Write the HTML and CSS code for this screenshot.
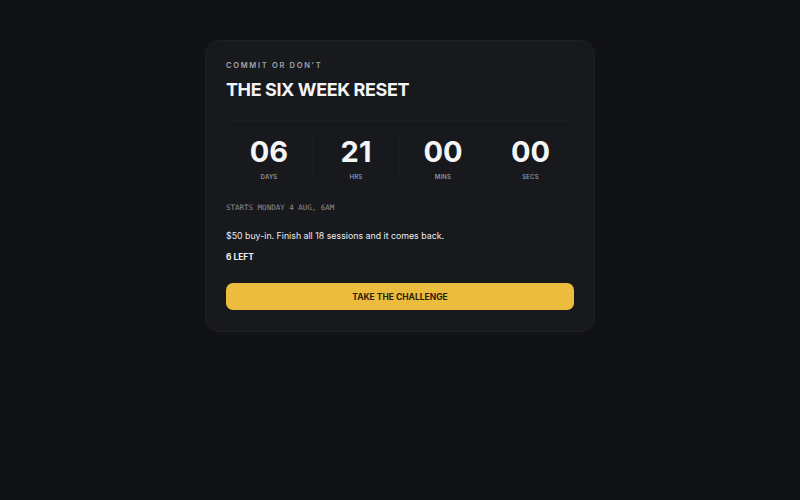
FILE: index.html
```html
<!DOCTYPE html>
<html lang="en">
<head>
  <meta charset="UTF-8" />
  <meta name="viewport" content="width=device-width, initial-scale=1.0"/>
  <title>The Six Week Reset</title>
  <link rel="stylesheet" href="styles.css">
</head>
<body>

  <main class="page">
    <section class="card">
      <p class="eyebrow">Commit or don't</p>
      <h1 class="title">THE SIX WEEK RESET</h1>

      <!-- countdown -->
      <div class="countdown">
        <div class="unit">
          <span class="num">06</span>
          <span class="label">Days</span>
        </div>
        <div class="unit">
          <span class="num">21</span>
          <span class="label">Hrs</span>
        </div>
        <div class="unit">
          <span class="num">00</span>
          <span class="label">Mins</span>
        </div>
        <div class="unit">
          <span class="num">00</span>
          <span class="label">Secs</span>
        </div>
      </div>

      <p class="starts">STARTS MONDAY 4 AUG, 6AM</p>
      <p class="blurb">$50 buy-in. Finish all 18 sessions and it comes back.</p>
      <p class="spots">6 LEFT</p>

      <button class="cta">TAKE THE CHALLENGE</button>
    </section>
  </main>

</body>
</html>
```

FILE: styles.css
```css
body {
  margin: 0;
  background: #111214;
  font-family: Inter, "Noto Sans", sans-serif;
  color: #f2f2f4;
}
.page {
  display: flex;
  justify-content: center;
  padding-top: 40px;
}
.card {
  width: 348px;
  padding: 20px 20px 21px;
  background: #18191d;
  border: 1px solid #1f2024;
  border-radius: 14px;
}
.eyebrow {
  margin: 0;
  font-size: 7.5px;
  font-weight: 600;
  letter-spacing: 1.7px;
  text-transform: uppercase;
  color: #a3a4ab;
  line-height: 10px;
}
.title {
  margin: 7px 0 0;
  font-size: 18px;
  font-weight: 700;
  letter-spacing: -0.4px;
  line-height: 24px;
  color: #f4f4f6;
}
.countdown {
  display: grid;
  grid-template-columns: repeat(4, 1fr);
  margin-top: 18px;
  border-top: 1px solid #1d1e22;
  padding: 15px 0 12px;
}
.unit {
  display: flex;
  flex-direction: column;
  align-items: center;
  border-right: 1px solid #1c1d21;
}
.unit:last-child {
  border-right: none;
}
.num {
  font-size: 29px;
  font-weight: 700;
  line-height: 32px;
  color: #f5f5f7;
}
.label {
  margin-top: 5px;
  font-size: 6px;
  font-weight: 500;
  text-transform: uppercase;
  letter-spacing: 0.2px;
  color: #a0a1a8;
}
.starts {
  margin: 10px 0 0;
  font-family: "DejaVu Sans Mono", "Liberation Mono", monospace;
  font-size: 7.5px;
  color: #8d8e95;
  line-height: 12px;
}
.blurb {
  margin: 15px 0 0;
  font-size: 8.8px;
  color: #ececef;
  line-height: 14px;
}
.spots {
  margin: 8px 0 0;
  font-size: 8.4px;
  font-weight: 700;
  color: #f2f2f4;
  line-height: 12px;
}
.cta {
  display: block;
  width: 100%;
  height: 27px;
  margin-top: 20px;
  border: none;
  border-radius: 7px;
  background: #ebbc3e;
  color: #2a2108;
  font-family: Inter, "Noto Sans", sans-serif;
  font-size: 8.5px;
  font-weight: 700;
  cursor: pointer;
}
```
